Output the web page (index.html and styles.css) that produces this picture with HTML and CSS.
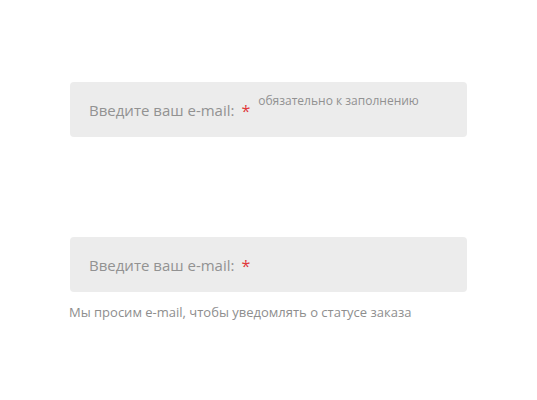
FILE: index.html
```html
<!DOCTYPE html>
<html lang="ru">
<head>
<meta charset="utf-8">
<link rel="stylesheet" href="styles.css">
</head>
<body>
<div class="page">
  <div class="field">
    <div class="box">
      <span class="label">Введите ваш e-mail:</span>
      <span class="req">*</span>
      <span class="note">обязательно к заполнению</span>
    </div>
  </div>
  <div class="field second">
    <div class="box">
      <span class="label">Введите ваш e-mail:</span>
      <span class="req">*</span>
    </div>
    <div class="hint">Мы просим e-mail, чтобы уведомлять о статусе заказа</div>
  </div>
</div>
</body>
</html>
```
FILE: styles.css
```css
html, body {
  margin: 0;
  padding: 0;
  background: #fff;
}
body {
  font-family: "Open Sans", "Liberation Sans", sans-serif;
  color: #8a8a8a;
}
.page {
  padding: 82px 0 0 70px;
  width: 397px;
}
.field.second {
  margin-top: 100px;
}
.box {
  height: 55px;
  box-sizing: border-box;
  background: #ececec;
  border-radius: 4px;
  padding: 0 19px;
  display: flex;
  align-items: center;
}
.label {
  font-size: 15px;
  color: #929292;
}
.req {
  color: #e0383b;
  font-size: 16px;
  margin-left: 7px;
  line-height: 1;
  position: relative;
  top: 1px;
}
.note {
  font-size: 12px;
  color: #919191;
  margin-left: 8px;
  align-self: flex-start;
  margin-top: 10px;
}
.hint {
  font-size: 13px;
  color: #8e8e8e;
  margin-top: 11px;
  margin-left: -1px;
}
```
